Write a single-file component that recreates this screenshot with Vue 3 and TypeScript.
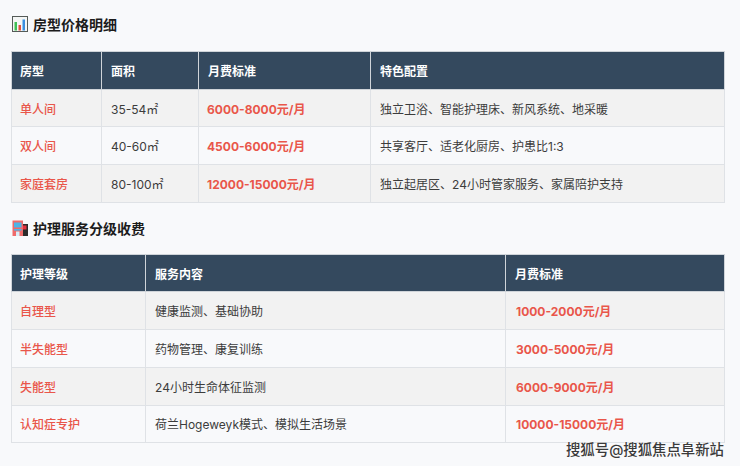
<script setup lang="ts">
interface Section {
  title: string
  widths: number[]
  heads: string[]
  rows: string[][]
}
const sections: Section[] = [
  {
    title: '房型价格明细',
    widths: [90, 97, 172, 354],
    heads: ['房型', '面积', '月费标准', '特色配置'],
    rows: [
      ['单人间', '35-54㎡', '6000-8000元/月', '独立卫浴、智能护理床、新风系统、地采暖'],
      ['双人间', '40-60㎡', '4500-6000元/月', '共享客厅、适老化厨房、护患比1:3'],
      ['家庭套房', '80-100㎡', '12000-15000元/月', '独立起居区、24小时管家服务、家属陪护支持'],
    ],
  },
  {
    title: '护理服务分级收费',
    widths: [134, 360, 219],
    heads: ['护理等级', '服务内容', '月费标准'],
    rows: [
      ['自理型', '健康监测、基础协助', '1000-2000元/月'],
      ['半失能型', '药物管理、康复训练', '3000-5000元/月'],
      ['失能型', '24小时生命体征监测', '6000-9000元/月'],
      ['认知症专护', '荷兰Hogeweyk模式、模拟生活场景', '10000-15000元/月'],
    ],
  },
]
</script>

<template>
  <main class="page">
    <section v-for="(s, si) in sections" :key="s.title" class="section">
      <h2 class="title">
        <svg v-if="si === 0" class="icon" viewBox="0 0 16 16">
          <rect x="0.5" y="0.5" width="15" height="15" fill="#f4f6f5" stroke="#555b58" />
          <rect x="2.5" y="6" width="2.5" height="8.5" fill="#3fbf55" />
          <rect x="6.5" y="9" width="2.5" height="5.5" fill="#e2503f" />
          <rect x="10.5" y="3.5" width="2.5" height="11" fill="#3b8fe0" />
        </svg>
        <svg v-else class="icon" viewBox="0 0 16 16">
          <rect x="10" y="4" width="6" height="12" fill="#2b2b2b" />
          <rect x="0.5" y="0.5" width="10.5" height="15.5" fill="#ef6a6a" />
          <rect x="2" y="2.5" width="7.5" height="5" fill="#4db4e6" />
          <rect x="2" y="9" width="7.5" height="1.6" fill="#4db4e6" />
          <rect x="4" y="11.5" width="3.5" height="4.5" fill="#d8eef8" />
          <rect x="11" y="5.5" width="3.5" height="4" fill="#e2313f" />
        </svg>
        <span>{{ s.title }}</span>
      </h2>
      <table class="table">
        <colgroup>
          <col v-for="(w, i) in s.widths" :key="i" :style="{ width: w + 'px' }" />
        </colgroup>
        <thead>
          <tr>
            <th v-for="h in s.heads" :key="h">{{ h }}</th>
          </tr>
        </thead>
        <tbody>
          <tr v-for="(r, ri) in s.rows" :key="ri" :class="{ odd: ri % 2 === 0 }">
            <td v-for="(c, ci) in r" :key="ci" :class="{ accent: ci === 0, strong: ci === 2 }">{{ c }}</td>
          </tr>
        </tbody>
      </table>
    </section>
    <div class="mark">搜狐号@搜狐焦点阜新站</div>
  </main>
</template>

<style scoped>
.page {
  position: relative;
  box-sizing: border-box;
  width: 740px;
  height: 466px;
  padding: 13px 15px 0 11px;
  overflow: hidden;
  background: #f8f9fb;
  font-family: Inter, "Noto Sans CJK SC", sans-serif;
  color: #3c3c3c;
}
.section {
  margin-bottom: 14px;
}
.title {
  display: flex;
  align-items: center;
  gap: 5px;
  height: 22px;
  margin: 0 0 16px 1px;
  font-size: 14px;
  font-weight: 700;
  color: #1c1c1c;
}
.section + .section .title {
  margin-bottom: 15px;
}
.icon {
  width: 16px;
  height: 16px;
  flex: none;
}
.table {
  width: 713px;
  border-collapse: collapse;
  table-layout: fixed;
  font-size: 12px;
}
th,
td {
  box-sizing: border-box;
  padding: 0 9px;
  text-align: left;
  border: 1px solid #dfe2e6;
}
th:first-child,
td:first-child {
  padding-left: 8px;
}
th {
  height: 37.7px;
  background: #34495e;
  color: #fff;
  font-weight: 700;
  border-color: #cfd4d9;
}
td {
  height: 37.7px;
}
.odd td {
  background: #f2f2f2;
}
.accent {
  color: #e9564a;
  font-weight: 500;
}
.strong {
  color: #e9564a;
  font-weight: 700;
  padding-left: 8px;
}
.section + .section .strong {
  padding-left: 10px;
}
.mark {
  position: absolute;
  right: 16px;
  bottom: 7px;
  font-size: 14.4px;
  font-weight: 500;
  line-height: 18px;
  color: #3a3a3a;
  text-shadow: 0 0 2px #fff;
}
</style>

<style>
html,
body {
  margin: 0;
  background: #f8f9fb;
}
</style>
